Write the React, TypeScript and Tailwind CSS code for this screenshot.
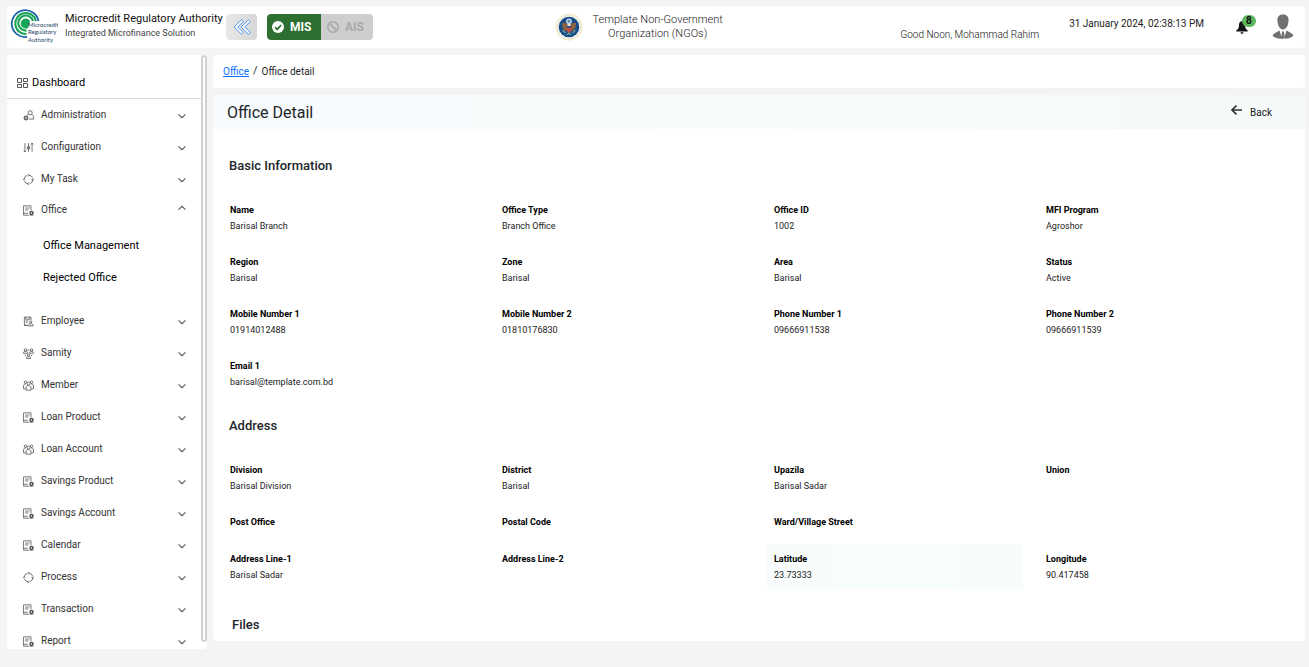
import { useState } from "react";
import type { ReactNode } from "react";

type IconName = "admin" | "config" | "ring" | "doc" | "badge" | "nodes" | "people";

interface MenuItem {
  label: string;
  icon: IconName;
  children?: string[];
}

interface Field {
  label: string;
  value?: string;
  active?: boolean;
}

const MENU: MenuItem[] = [
  { label: "Administration", icon: "admin" },
  { label: "Configuration", icon: "config" },
  { label: "My Task", icon: "ring" },
  { label: "Office", icon: "doc", children: ["Office Management", "Rejected Office"] },
  { label: "Employee", icon: "badge" },
  { label: "Samity", icon: "nodes" },
  { label: "Member", icon: "people" },
  { label: "Loan Product", icon: "doc" },
  { label: "Loan Account", icon: "people" },
  { label: "Savings Product", icon: "doc" },
  { label: "Savings Account", icon: "doc" },
  { label: "Calendar", icon: "doc" },
  { label: "Process", icon: "ring" },
  { label: "Transaction", icon: "doc" },
  { label: "Report", icon: "doc" },
];

const BASIC: Field[] = [
  { label: "Name", value: "Barisal Branch" },
  { label: "Office Type", value: "Branch Office" },
  { label: "Office ID", value: "1002" },
  { label: "MFI Program", value: "Agroshor" },
  { label: "Region", value: "Barisal" },
  { label: "Zone", value: "Barisal" },
  { label: "Area", value: "Barisal" },
  { label: "Status", value: "Active" },
  { label: "Mobile Number 1", value: "01914012488" },
  { label: "Mobile Number 2", value: "01810176830" },
  { label: "Phone Number 1", value: "09666911538" },
  { label: "Phone Number 2", value: "09666911539" },
  { label: "Email 1", value: "barisal@template.com.bd" },
];

const ADDRESS: (Field | null)[] = [
  { label: "Division", value: "Barisal Division" },
  { label: "District", value: "Barisal" },
  { label: "Upazila", value: "Barisal Sadar" },
  { label: "Union" },
  { label: "Post Office" },
  { label: "Postal Code" },
  { label: "Ward/Village Street" },
  null,
  { label: "Address Line-1", value: "Barisal Sadar" },
  { label: "Address Line-2" },
  { label: "Latitude", value: "23.73333", active: true },
  { label: "Longitude", value: "90.417458" },
];

const ICONS: Record<IconName, ReactNode> = {
  admin: (
    <>
      <circle cx="13" cy="5" r="3.800" />
      <path d="M10 8c-1 1-2.500 1-3 2M16 8c2 1 3 3 3 6v2.500h-8" />
      <circle cx="5.500" cy="14.500" r="3.500" strokeWidth="2" />
      <circle cx="5.500" cy="14.500" r="1" />
    </>
  ),
  config: (
    <>
      <path d="M3.500 2v16M10 2v16M16.500 2v16" />
      <path d="M1 15.500 3.500 18 6 15.500M14 4.500 16.500 2 19 4.500M8 8.500h4v4H8z" />
    </>
  ),
  ring: (
    <>
      <circle cx="10" cy="10" r="8" strokeDasharray="9.500 3.060" />
      <path d="M9 .5 11.500 2 9.500 4.500M19.500 9 18 11.500 15.500 9.500M11 19.500 8.500 18l2-2.500M.5 11 2 8.500l2.500 2" />
    </>
  ),
  doc: (
    <>
      <path d="M14.500 9.500V1.500H1v17h10M4 5.500h8M4 9h6M1 15h8" />
      <circle cx="15.500" cy="14.500" r="2.800" strokeWidth="2.600" />
      <path d="M12.500 18.500h6" />
    </>
  ),
  badge: (
    <>
      <path d="M14.500 7.500V2h-12v15h6M5 2v4h7V2M5 9h5M5 12h3" />
      <circle cx="14" cy="11" r="2" />
      <path d="M10 18c0-3 1.500-4 4-4s4.500 1 4.500 4zM2 17h6" />
    </>
  ),
  nodes: (
    <>
      <circle cx="4.500" cy="3.500" r="2.200" />
      <circle cx="15.500" cy="3.500" r="2.200" />
      <circle cx="10" cy="12.500" r="2.200" />
      <path d="M1 9.500V8c0-1.500 1.500-2 3.500-2S8 6.500 8 8v1.500zM12 9.500V8c0-1.500 1.500-2 3.500-2S19 6.500 19 8v1.500zM6.500 19v-1c0-1.500 1.500-2.500 3.500-2.500s3.500 1 3.500 2.500v1zM8 3.500h4M3.500 12l2 3M16.500 12l-2 3" />
    </>
  ),
  people: (
    <>
      <circle cx="4.500" cy="4" r="2.300" />
      <circle cx="15.500" cy="4" r="2.300" />
      <circle cx="10" cy="6.500" r="2.800" />
      <path d="M5.500 18.500V14c0-2.500 2-4 4.500-4s4.500 1.500 4.500 4v4.500zM5 16H1v-5c0-2.500 1.500-4 4.500-4M15 16h4v-5c0-2.500-1.500-4-4.500-4" />
    </>
  ),
};

function MenuIcon({ name }: { name: IconName }) {
  return (
    <svg className="w-[11px] h-[11px] shrink-0" viewBox="0 0 20 20" fill="none" stroke="#505050" strokeWidth="1.400">
      {ICONS[name]}
    </svg>
  );
}

function Chevron({ open }: { open: boolean }) {
  return (
    <svg className="w-2 h-2 shrink-0" viewBox="0 0 8 8" fill="none" stroke="#55585c" strokeWidth="1.100">
      <path d={open ? "M.5 5.700 4 2.300l3.500 3.400" : "M.5 2.300 4 5.700l3.500-3.400"} />
    </svg>
  );
}

function Logo() {
  return (
    <svg className="w-12 h-9 shrink-0" viewBox="0 0 48 36" fill="none">
      <path d="M28.500 12A13.500 13.500 0 1 0 17 28" stroke="#1f64a8" strokeWidth="1.800" />
      <path d="M26 12A10.500 10.500 0 1 0 16.500 25" stroke="#17a455" strokeWidth="2" />
      <path d="M23 12A7.500 7.500 0 1 0 16.500 21.500" stroke="#17a455" strokeWidth="2.200" />
      <path d="M20 12a5 5 0 1 0-2 7z" fill="#17a455" />
      <g fill="#24456b" fontFamily="Lato, sans-serif" fontSize="6">
        <text x="18" y="17.500">Microcredit</text>
        <text x="18" y="25">Regulatory</text>
        <text x="18" y="32.500">Authority</text>
      </g>
    </svg>
  );
}

function Emblem() {
  return (
    <svg className="w-7 h-7 shrink-0" viewBox="0 0 28 28">
      <circle cx="14" cy="14" r="13" fill="#fbf8e8" stroke="#eadb98" strokeWidth="1" strokeDasharray="1.500 1" />
      <circle cx="14" cy="14" r="11.500" fill="none" stroke="#c5cedd" strokeWidth="1" strokeDasharray="1 1" />
      <circle cx="14" cy="14" r="10.300" fill="#164b8c" />
      <circle cx="14" cy="8.300" r="2.900" fill="#c6d6e5" />
      <circle cx="14" cy="8.300" r="1.400" fill="#5c83ab" />
      <path d="M13 12c-2-2-4-2.500-6-2 0 4 1 7 4 8l2-1zM15 12c2-2 4-2.500 6-2 0 4-1 7-4 8l-2-1z" fill="#8b6440" />
      <path d="M12.500 11h3v2h-3z" fill="#eee5cf" />
      <path d="M11.500 13h5v4c0 2-2.500 3-2.500 3s-2.500-1-2.500-3z" fill="#b84f4b" />
      <path d="M11.500 13h5v1.500h-5z" fill="#254b87" />
      <path d="m7.500 17 3 3M20.500 17l-3 3M12 22l2-2 2 2" stroke="#78a681" strokeWidth="1.200" fill="none" />
    </svg>
  );
}

function Header() {
  return (
    <header className="flex items-center justify-between h-[42px] shrink-0 pl-[3px] pr-[11px] bg-white rounded">
      <div className="flex items-center">
        <Logo />
        <div className="ml-[7px] w-[161px] pb-[2px] whitespace-nowrap">
          <p className="text-[11px] leading-[14px] text-[#111111]">Microcredit Regulatory Authority</p>
          <p className="text-[9px] leading-[14px] text-[#444444]">Integrated Microfinance Solution</p>
        </div>
        <button
          aria-label="Collapse menu"
          className="flex items-center justify-center w-[31px] h-[26px] rounded bg-linear-to-r from-[#e8e8e8] to-[#d6d6d6]"
        >
          <svg className="w-[18px] h-4" viewBox="0 0 18 16" fill="#ffffff" stroke="#3f8cf3" strokeWidth="0.9">
            <path d="M8.500.8 1 8l7.500 7.200 1.800-1.700L4.700 8l5.600-5.500z" />
            <path d="M15.500.8 8 8l7.500 7.200 1.800-1.700L11.700 8l5.600-5.500z" />
          </svg>
        </button>
        <div className="flex ml-[10px] h-[26px] rounded overflow-hidden bg-[#cecece] text-[12px] font-bold">
          <button className="flex items-center gap-[6px] w-[54px] pl-[5px] rounded-l bg-[#2d6f31] text-white">
            <svg className="w-3 h-3" viewBox="0 0 12 12">
              <circle cx="6" cy="6" r="6" fill="#ffffff" />
              <path d="m3 6.200 2.200 2.200L9.200 4" fill="none" stroke="#2d6f31" strokeWidth="1.700" />
            </svg>
            MIS
          </button>
          <button className="flex items-center gap-[6px] w-[52px] pl-[6px] text-[#a9a9a9]">
            <svg className="w-3 h-3" viewBox="0 0 12 12" fill="none" stroke="#a9a9a9" strokeWidth="1.500">
              <circle cx="6" cy="6" r="5.200" />
              <path d="m2.400 2.400 7.200 7.200" />
            </svg>
            AIS
          </button>
        </div>
      </div>

      <div className="flex items-center pl-[14px]">
        <Emblem />
        <p className="w-[150px] px-2 text-center text-[11px] leading-[14px] font-light text-[#222222]">
          Template Non-Government Organization (NGOs)
        </p>
      </div>

      <div className="flex items-center text-[10px] whitespace-nowrap">
        <p className="pt-[14px] font-light text-[#111111]">Good Noon, Mohammad Rahim</p>
        <p className="ml-[30px] pb-2 text-[#222222]">31 January 2024, 02:38:13 PM</p>
        <button aria-label="Notifications" className="relative ml-8 w-3 h-[14px]">
          <svg className="w-3 h-[14px]" viewBox="0 0 12 14" fill="#151515">
            <path d="M6 1C4 1.200 3 3 3 5c0 3-1 4-2.700 5.500V11.500h11.400v-1C10 9 9 8 9 5 9 3 8 1.200 6 1zM4.500 12.200h3c0 2-3 2-3 0z" />
          </svg>
          <span className="absolute -top-[5px] left-[6px] w-[14px] h-3 rounded-full bg-[#5db75f] text-[10px] leading-3 font-bold text-[#111111]">
            8
          </span>
        </button>
        <button aria-label="Profile" className="ml-6">
          <svg className="w-[22px] h-[26px]" viewBox="0 0 22 26" fill="#6f7072">
            <path d="M11 .5c4 0 6 2.500 5.500 6.500-.3 4.500-2.300 8.500-5.500 8.500S5.800 11.500 5.500 7C5 3 7 .5 11 .5z" />
            <path d="M7.500 16.500 10 24.800C5 25 2 23.500.5 21.500c1-2 3-2.500 7-5zM14.500 16.500 12 24.800c5 .2 8-1.300 9.500-3.300-1-2-3-2.500-7-5zM10 17.500h2l.8 7.300H9.200z" />
          </svg>
        </button>
      </div>
    </header>
  );
}

function Sidebar() {
  const [openItem, setOpenItem] = useState("Office");

  return (
    <nav className="flex w-[200px] shrink-0 mb-[18px] bg-white rounded overflow-hidden text-[10px] text-[#333333]">
      <div className="flex-1 overflow-y-auto [scrollbar-width:none]">
        <a href="#dashboard" className="flex items-center gap-1 h-11 pt-3 pl-[10px] text-[11px] leading-4 text-black border-b border-[#d9d9d9]">
          <svg className="w-[11px] h-[10px]" viewBox="0 0 11 10" fill="none" stroke="#444444" strokeWidth="0.900">
            <path d="M.5.5h4v4h-4zM6.500.5h4v3h-4zM.5 6.500h4v3h-4zM6.500 5.500h4v4h-4z" />
          </svg>
          Dashboard
        </a>
        {MENU.map((item) => {
          const open = openItem === item.label;
          return (
            <div key={item.label}>
              <button
                onClick={() => setOpenItem(open ? "" : item.label)}
                aria-expanded={open}
                className={`flex items-center gap-[7px] w-full pl-4 pr-[15px] text-left ${open ? "h-[30px]" : "h-8"}`}
              >
                <MenuIcon name={item.icon} />
                <span className="flex-1 pb-[2px]">{item.label}</span>
                <span className={open ? "pb-1" : "pt-[2px]"}>
                  <Chevron open={open} />
                </span>
              </button>
              {open && item.children && (
                <div className="pt-[5px] pb-[11px] text-[11px] text-black">
                  {item.children.map((child) => (
                    <a key={child} href="#office" className="flex items-center h-8 pl-9">
                      {child}
                    </a>
                  ))}
                </div>
              )}
            </div>
          );
        })}
      </div>
      <div className="w-[6px] mb-[7px] rounded-full border-2 border-[#d0d0d2]" />
    </nav>
  );
}

function FieldCell({ field }: { field: Field | null }) {
  if (!field) return <div />;

  return (
    <div
      className={`min-h-[30px] px-[7px] pt-[7px] pb-[6px] text-[9px] leading-4 ${
        field.active ? "bg-linear-to-r from-[#f8fcfc] via-[#f7fef9] to-[#f8fcfb]" : ""
      }`}
    >
      <dt className="font-bold text-black">{field.label}</dt>
      {field.value && <dd className="text-[#222222]">{field.value}</dd>}
    </div>
  );
}

function Section({ title, fields }: { title: string; fields: (Field | null)[] }) {
  return (
    <section className="pt-5">
      <h2 className="pl-[6px] mb-[19px] text-[13px] leading-5 font-medium text-[#212529]">{title}</h2>
      <dl className="grid grid-cols-4 gap-x-4 gap-y-[7px]">
        {fields.map((field, i) => (
          <FieldCell key={i} field={field} />
        ))}
      </dl>
    </section>
  );
}

export default function App() {
  return (
    <div className="flex flex-col gap-[7px] h-screen pt-[6px] pl-[7px] pr-1 bg-[#f4f4f4] font-[Roboto,sans-serif]">
      <Header />
      <div className="flex flex-1 gap-[6px] min-h-0">
        <Sidebar />
        <main className="flex flex-col flex-1 gap-[7px] min-w-0 pb-[26px]">
          <div className="flex items-center gap-1 h-[33px] shrink-0 pl-[10px] bg-white rounded text-[10px] text-[#212529]">
            <a href="#office" className="text-[#0d6efd] underline">
              Office
            </a>
            <span className="text-[11px]">/</span>
            <span>Office detail</span>
          </div>

          <div className="flex-1 min-h-0 bg-white rounded overflow-y-auto">
            <div className="flex items-center justify-between h-[34px] pl-[14px] pr-[33px] bg-linear-to-r from-[#f8fbfd] via-[#f7fcfc] to-[#f5f9fa]">
              <h1 className="pt-[2px] text-[16px] text-[#212529]">Office Detail</h1>
              <button className="flex items-center gap-2 text-[10px] text-[#222222]">
                <svg className="w-[11px] h-[14px] pb-1" viewBox="0 0 11 10" fill="none" stroke="#333333" strokeWidth="1.700">
                  <path d="M11 5H1M5.500.6 1 5l4.500 4.400" />
                </svg>
                Back
              </button>
            </div>
            <div className="px-[10px] pt-[7px]">
              <Section title="Basic Information" fields={BASIC} />
              <Section title="Address" fields={ADDRESS} />
              <h2 className="pt-[26px] pl-[9px] text-[13px] leading-5 font-medium text-[#212529]">Files</h2>
            </div>
          </div>
        </main>
      </div>
    </div>
  );
}
